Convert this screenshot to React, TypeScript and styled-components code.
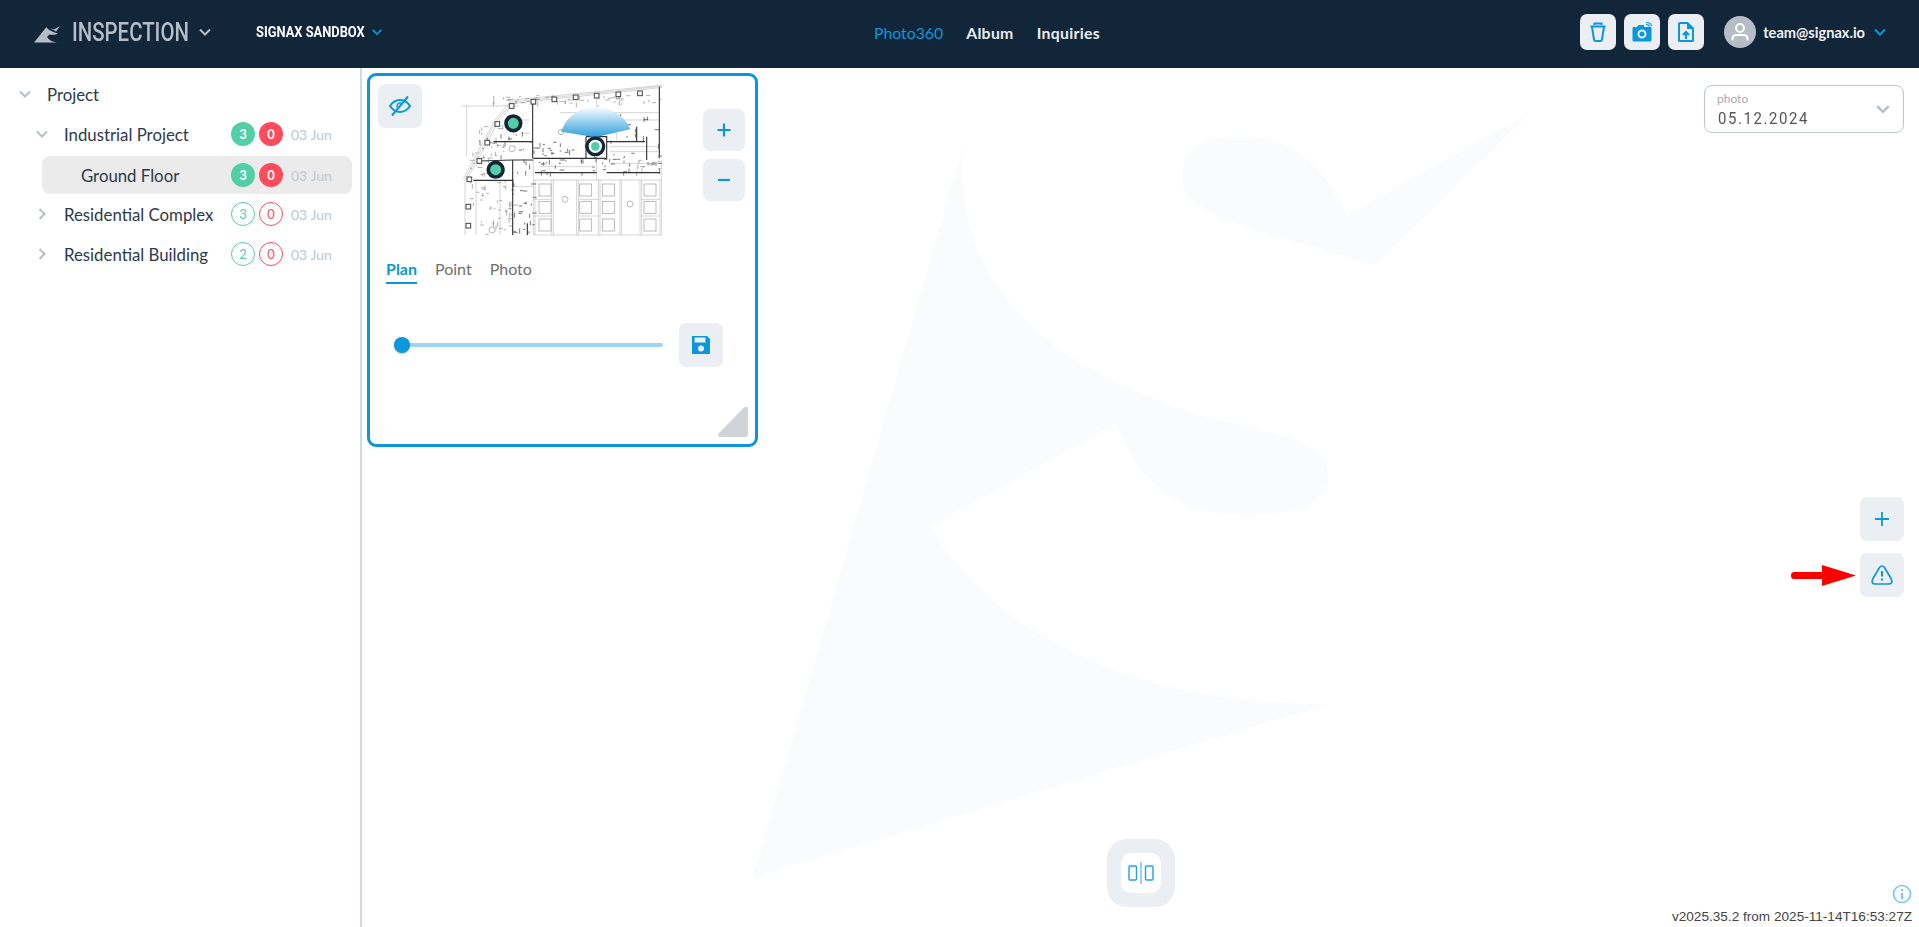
import styled, { createGlobalStyle } from "styled-components";

const BLUE = "#0a97db";
const NAVY = "#12263a";

const GlobalStyle = createGlobalStyle`
  html, body { margin: 0; padding: 0; height: 100%; background: #fff; overflow: hidden; }
  body { font-family: "Lato", "Noto Sans", sans-serif; color: #2c3a4d; }
  #root { height: 100%; }
`;

const Page = styled.div`
  display: flex;
  flex-direction: column;
  width: 1919px;
  height: 927px;
`;

const Header = styled.header`
  display: flex;
  align-items: center;
  flex: 0 0 68px;
  box-sizing: border-box;
  background: ${NAVY};
  padding: 0 32px 4px 34px;
`;

const Logo = styled.svg`
  width: 28px;
  height: 20px;
  margin: 3px 10px 0 0;
`;

const Narrow = styled.span<{ $w: number; $scale: number }>`
  display: inline-block;
  width: ${(p) => p.$w}px;
  white-space: nowrap;
  transform: scaleX(${(p) => p.$scale});
  transform-origin: left center;
`;

const AppName = styled(Narrow)`
  font-family: "Roboto", sans-serif;
  font-weight: 500;
  font-size: 25.5px;
  color: #b6bdc7;
`;

const Chevron = styled.svg<{ $color?: string; $size?: number }>`
  width: ${(p) => p.$size ?? 14}px;
  height: ${(p) => p.$size ?? 14}px;
  flex: none;
  fill: none;
  stroke: ${(p) => p.$color ?? "#b6bdc7"};
  stroke-width: 2;
`;

const AppChevron = styled(Chevron)`
  margin-left: 14px;
`;

const ProjectName = styled(Narrow)`
  font-family: "Roboto", sans-serif;
  font-weight: 700;
  font-size: 15.5px;
  color: #fff;
  margin-left: 44px;
`;

const ProjectChevron = styled(Chevron)`
  margin-left: 5px;
`;

const Nav = styled.nav`
  display: flex;
  gap: 23px;
  margin-left: 491px;
`;

const NavItem = styled.a<{ $active?: boolean }>`
  font-size: 15.8px;
  font-weight: ${(p) => (p.$active ? 400 : 700)};
  letter-spacing: ${(p) => (p.$active ? 0 : 0.3)}px;
  color: ${(p) => (p.$active ? BLUE : "#e8ecf0")};
`;

const HeaderRight = styled.div`
  display: flex;
  align-items: center;
  margin-left: auto;
`;

const ToolGroup = styled.div`
  display: flex;
  gap: 8px;
  margin-right: 20px;
`;

const IconButton = styled.button<{ $size?: number }>`
  display: flex;
  align-items: center;
  justify-content: center;
  width: ${(p) => p.$size ?? 44}px;
  height: ${(p) => p.$size ?? 44}px;
  padding: 0;
  border: 0;
  border-radius: 7px;
  background: #ebeff3;
  color: ${BLUE};
`;

const Avatar = styled.div`
  display: flex;
  align-items: center;
  justify-content: center;
  width: 32px;
  height: 32px;
  border-radius: 50%;
  background: #b6bdc7;
`;

const Email = styled.span`
  margin: 0 8px 0 7px;
  font-size: 14.6px;
  font-weight: 700;
  color: #f0f2f5;
`;

const Main = styled.main`
  display: flex;
  flex: 1;
  min-height: 0;
`;

const Sidebar = styled.aside`
  flex: 0 0 360px;
  padding-top: 6px;
  border-right: 2px solid #cfd8e3;
`;

const Row = styled.div<{ $selected?: boolean; $indent: number }>`
  display: flex;
  align-items: center;
  box-sizing: border-box;
  height: ${(p) => (p.$selected ? 38 : 40)}px;
  margin: ${(p) => (p.$selected ? "2px 8px 0 42px" : "0 8px 0 0")};
  padding-left: ${(p) => (p.$selected ? 39 : p.$indent)}px;
  border-radius: 8px;
  background: ${(p) => (p.$selected ? "#ebebeb" : "transparent")};
`;

const RowChevron = styled(Chevron)`
  margin-right: 15px;
`;

const RowLabel = styled.span`
  flex: 1;
  font-size: 16.8px;
  color: #2c3a4d;
  white-space: nowrap;
`;

const Badge = styled.span<{ $kind: "ok" | "bad"; $filled: boolean }>`
  display: flex;
  align-items: center;
  justify-content: center;
  box-sizing: border-box;
  width: 24px;
  height: 24px;
  margin-right: 4px;
  border-radius: 50%;
  font-size: 13px;
  font-weight: 700;
  ${(p) => {
    const c = p.$kind === "ok" ? "#52cfa6" : "#ff4b5c";
    return p.$filled
      ? `background: ${c}; color: #fff;`
      : `border: 1px solid ${c}; color: ${c}; font-weight: 400;`;
  }}
`;

const RowDate = styled.span`
  width: 61px;
  margin-left: 4px;
  font-size: 14px;
  color: #c0c6d2;
  white-space: nowrap;
`;

const Stage = styled.section`
  position: relative;
  flex: 1;
  overflow: hidden;
`;

const Watermark = styled.svg`
  position: absolute;
  inset: 0;
  width: 100%;
  height: 100%;
`;

const Panel = styled.div`
  position: absolute;
  left: 5px;
  top: 5px;
  display: flex;
  flex-direction: column;
  box-sizing: border-box;
  width: 391px;
  height: 374px;
  padding: 8px 10px 8px 8px;
  border: 3px solid ${BLUE};
  border-radius: 9px;
  background: #fff;
`;

const PanelTop = styled.div`
  display: flex;
  height: 154px;
`;

const PlanImage = styled.svg`
  width: 200px;
  height: 151px;
  margin: 1px 0 0 40px;
  filter: blur(0.4px);
`;

const ZoomColumn = styled.div`
  display: flex;
  flex-direction: column;
  gap: 8px;
  margin: 25px 0 0 41px;
`;

const Tabs = styled.div`
  display: flex;
  gap: 18px;
  margin: 21px 0 0 8px;
`;

const Tab = styled.span<{ $active?: boolean }>`
  padding-bottom: 4px;
  font-size: 16px;
  font-weight: ${(p) => (p.$active ? 700 : 400)};
  color: ${(p) => (p.$active ? BLUE : "#6f6f6f")};
  border-bottom: 2px solid ${(p) => (p.$active ? BLUE : "transparent")};
`;

const SliderRow = styled.div`
  display: flex;
  align-items: center;
  margin: 39px 0 0 16px;
`;

const Slider = styled.div`
  display: flex;
  align-items: center;
  width: 269px;
  height: 4px;
  margin-right: 16px;
  border-radius: 2px;
  background: #9fd6ef;
`;

const Thumb = styled.span`
  width: 16px;
  height: 16px;
  border-radius: 50%;
  background: ${BLUE};
  box-shadow: 0 1px 2px rgba(0, 0, 0, 0.25);
`;

const Corner = styled.svg`
  position: relative;
  right: -3px;
  top: 1px;
  width: 30px;
  height: 31px;
  margin: auto 0 0 auto;
`;

const PhotoSelect = styled.div`
  position: absolute;
  top: 17px;
  right: 15px;
  display: flex;
  align-items: center;
  justify-content: space-between;
  box-sizing: border-box;
  width: 200px;
  height: 48px;
  padding: 0 12px 0 12px;
  border: 1px solid #bcc5d3;
  border-radius: 8px;
  background: #fff;
`;

const SelectText = styled.div`
  display: flex;
  flex-direction: column;
`;

const SelectLabel = styled.span`
  font-size: 12px;
  line-height: 15px;
  color: #aaa;
`;

const SelectValue = styled(Narrow)`
  margin: 1px 0 -1px 1px;
  font-family: "Roboto", sans-serif;
  font-size: 17px;
  line-height: 22px;
  letter-spacing: 1.8px;
  color: #555;
`;

const SideTools = styled.div`
  position: absolute;
  top: 429px;
  right: 15px;
  display: flex;
  flex-direction: column;
  gap: 12px;
`;

const RedArrow = styled.svg`
  position: absolute;
  left: -69px;
  top: 66px;
  width: 66px;
  height: 24px;
`;

const CompareDock = styled.div`
  position: absolute;
  left: 745px;
  bottom: 20px;
  display: flex;
  align-items: center;
  justify-content: center;
  width: 68px;
  height: 68px;
  border-radius: 20px;
  background: #ebeff3;
`;

const CompareButton = styled.div`
  display: flex;
  align-items: center;
  justify-content: center;
  width: 40px;
  height: 40px;
  border-radius: 10px;
  background: #fff;
`;

const Footer = styled.div`
  position: absolute;
  right: 7px;
  bottom: 3px;
  display: flex;
  flex-direction: column;
  align-items: flex-end;
  font-family: "Liberation Sans", sans-serif;
  font-size: 13.6px;
  line-height: 15px;
  color: #444;
`;

const InfoIcon = styled.svg`
  width: 20px;
  height: 20px;
  margin-bottom: 5px;
`;

const Down = () => <path d="M2 4.5 7 9.5 12 4.5" />;

const rows = [
  { label: "Project", indent: 18, open: true },
  { label: "Industrial Project", indent: 35, open: true, ok: 3, bad: 0, filled: true },
  { label: "Ground Floor", indent: 0, selected: true, ok: 3, bad: 0, filled: true },
  { label: "Residential Complex", indent: 35, open: false, ok: 3, bad: 0, filled: false },
  { label: "Residential Building", indent: 35, open: false, ok: 2, bad: 0, filled: false },
];

// column stubs along the curved outer wall
const columns = [
  [185, 78], [250, 65], [313, 58], [377, 52], [440, 47], [505, 43], [570, 40], [142, 132],
  [112, 188], [88, 243], [58, 298], [55, 380], [55, 437],
];

const thickWalls = [
  "M248 68V235", "M130 185H248", "M70 301H190", "M90 243 188 240H250", "M188 240V465",
  "M250 235H410", "M408 170V235", "M408 170H470V235H408", "M470 185H585", "M560 140V185",
  "M628 20V235", "M590 170V240", "M255 278H440", "M470 278H630", "M232 430V465",
];

const thinLines = [
  "M36 78H205", "M50 78V230", "M440 47V300", "M330 98H628", "M45 300V465", "M78 300V465",
  "M215 120H240", "M500 120H625", "M215 160H240", "M500 125V180", "M190 320H250", "M150 300V465",
  "M250 300H635", "M250 465H635", "M250 240V465", "M635 240V465", "M305 300V465", "M385 300V465",
  "M445 300V465", "M510 300V465", "M575 300V465", "M480 200H628", "M480 215H628", "M270 260H420",
  "M480 250H628", "M175 72 640 22", "M170 62 640 15", "M40 296 135 120 175 72", "M50 300 145 125 180 85",
  "M175 67 640 18", "M45 298 140 122 178 78", "M255 300V465", "M380 300V465", "M450 300V465", "M630 300V465",
  "M570 300V465", "M515 300V465", "M310 300V465", "M250 358H305", "M250 408H305", "M385 358H445", "M385 408H445",
  "M575 358H630", "M575 408H630",
];

const tiles = [285, 407, 475, 600].flatMap((x) => [330, 382, 435].map((y) => [x, y]));

// dense annotation clutter of the drawing, same on every render
function clutter(n: number, x0: number, y0: number, w: number, h: number, seed: number) {
  const out: string[] = [];
  let s = seed;
  const next = () => {
    s = (s * 16807) % 2147483647;
    return s / 2147483647;
  };
  for (let i = 0; i < n; i++) {
    const x = Math.round(x0 + next() * w);
    const y = Math.round(y0 + next() * h);
    const len = 4 + Math.round(next() * 12);
    out.push(next() > 0.5 ? `M${x} ${y}h${len}` : `M${x} ${y}v${len}`);
  }
  return out.join("");
}

const clutterDark = [
  clutter(70, 250, 180, 380, 100, 17),
  clutter(26, 190, 240, 60, 225, 91),
  clutter(18, 90, 150, 150, 90, 33),
  clutter(16, 480, 100, 140, 70, 57),
].join("");

const clutterLight = [
  clutter(50, 60, 300, 130, 165, 71),
  clutter(60, 130, 45, 500, 30, 5),
  clutter(40, 60, 120, 100, 170, 13),
  clutter(20, 560, 240, 70, 40, 29),
].join("");

function FloorPlan() {
  return (
    <PlanImage viewBox="36 15 600 453">
      <defs>
        <linearGradient id="cone" x1="0" y1="0" x2="0" y2="1">
          <stop offset="0" stopColor="#fff" />
          <stop offset="1" stopColor="#2f9fdc" />
        </linearGradient>
      </defs>
      <g fill="none" stroke="#a5a5a5" strokeWidth="1.4">
        {thinLines.map((d) => <path key={d} d={d} />)}
      </g>
      <path d={clutterLight} fill="none" stroke="#8a8a8a" strokeWidth="2" />
      <g fill="none" stroke="#333" strokeWidth="3.4">
        {thickWalls.map((d) => <path key={d} d={d} />)}
      </g>
      <path d={clutterDark} fill="none" stroke="#444" strokeWidth="2.2" />
      <g fill="#fff" stroke="#444" strokeWidth="3">
        {columns.map(([x, y]) => <rect key={`${x}-${y}`} x={x - 7} y={y - 7} width="14" height="14" />)}
      </g>
      <g fill="#fff" stroke="#aaa" strokeWidth="2.4">
        {tiles.map(([x, y]) => <rect key={`${x}-${y}`} x={x - 18} y={y - 18} width="36" height="36" />)}
        <circle cx="345" cy="358" r="9" />
        <circle cx="540" cy="372" r="9" />
        <circle cx="333" cy="156" r="8" />
        <circle cx="186" cy="206" r="9" />
        <circle cx="126" cy="450" r="9" />
      </g>
      <path d="M333 155C350 105 395 80 436 80S525 105 541 148L436 172Z" fill="url(#cone)" />
      <g stroke={NAVY} fill="#52cfa6">
        <circle cx="190" cy="130" r="22" strokeWidth="11" />
        <circle cx="137" cy="269" r="22" strokeWidth="11" />
      </g>
      <circle cx="436" cy="199" r="25" fill="#fff" stroke={NAVY} strokeWidth="10" />
      <circle cx="436" cy="199" r="13" fill="#52cfa6" />
    </PlanImage>
  );
}

export default function App() {
  return (
    <Page>
      <GlobalStyle />
      <Header>
        <Logo viewBox="0 0 28 20">
          <path d="M0 18.5 12.5 3C13 5 17 7.5 24 9.5 22 11 18 11 15.5 10.5L13 13C15 16 18 18 23 18.5Z" fill="#b6bdc7" />
          <path d="M16 4 20 5.5 26 2 22 7.5Z" fill="#b6bdc7" />
        </Logo>
        <AppName $w={112} $scale={0.8}>INSPECTION</AppName>
        <AppChevron viewBox="0 0 14 14"><Down /></AppChevron>
        <ProjectName $w={110} $scale={0.83}>SIGNAX SANDBOX</ProjectName>
        <ProjectChevron $color={BLUE} $size={12} viewBox="0 0 14 14"><Down /></ProjectChevron>
        <Nav>
          <NavItem $active>Photo360</NavItem>
          <NavItem>Album</NavItem>
          <NavItem>Inquiries</NavItem>
        </Nav>
        <HeaderRight>
          <ToolGroup>
            <IconButton $size={36}>
              <svg width="20" height="22" viewBox="0 0 20 22" fill="none" stroke="currentColor" strokeWidth="2">
                <path d="M2.5 5.5H17.5M6.5 4V2.5H13.5V4M4 6 6 18.5Q6.2 20 7.8 20H12.2Q13.8 20 14 18.5L16 6" />
              </svg>
            </IconButton>
            <IconButton $size={36}>
              <svg width="22" height="22" viewBox="0 0 22 22" fill="currentColor">
                <path d="M2.5 6H6L7.5 4H13V6H19.5Q20.5 6 20.5 7V19Q20.5 20.5 19 20.5H3Q1.5 20.5 1.5 19V7Q1.5 6 2.5 6ZM11 8.5A4.5 4.5 0 1 0 11 17.5 4.5 4.5 0 1 0 11 8.5ZM11 10.5A2.5 2.5 0 1 1 11 15.5 2.5 2.5 0 1 1 11 10.5Z" fillRule="evenodd" />
                <path d="M15 1.5Q20 1.5 20.5 5M15 3.5Q18 3.5 18.5 5.5" fill="none" stroke="currentColor" strokeWidth="1.2" />
              </svg>
            </IconButton>
            <IconButton $size={36}>
              <svg width="18" height="22" viewBox="0 0 18 22">
                <path d="M3 1H11L17 7V19.5Q17 21 15.5 21H2.5Q1 21 1 19.5V3Q1 1 3 1Z" fill="currentColor" />
                <path d="M3 3H10V8H15V19H3Z" fill="#ebeff3" />
                <path d="M9 18V12.5M6 14 9 11 12 14" fill="none" stroke="currentColor" strokeWidth="2.2" />
              </svg>
            </IconButton>
          </ToolGroup>
          <Avatar>
            <svg width="18" height="20" viewBox="0 0 18 20" fill="none" stroke="#fff" strokeWidth="2">
              <circle cx="9" cy="6" r="4" />
              <path d="M1.5 18.5V16.5Q1.5 13 5.5 13H12.5Q16.5 13 16.5 16.5V18.5" />
            </svg>
          </Avatar>
          <Email>team@signax.io</Email>
          <Chevron $color={BLUE} viewBox="0 0 14 14"><Down /></Chevron>
        </HeaderRight>
      </Header>
      <Main>
        <Sidebar>
          {rows.map((r) => (
            <Row key={r.label} $indent={r.indent} $selected={r.selected}>
              {!r.selected && (
                <RowChevron $size={14} viewBox="0 0 14 14">
                  {r.open ? <Down /> : <path d="M4.5 2 9.5 7 4.5 12" />}
                </RowChevron>
              )}
              <RowLabel>{r.label}</RowLabel>
              {r.ok !== undefined && (
                <>
                  <Badge $kind="ok" $filled={!!r.filled}>{r.ok}</Badge>
                  <Badge $kind="bad" $filled={!!r.filled}>{r.bad}</Badge>
                  <RowDate>03 Jun</RowDate>
                </>
              )}
            </Row>
          ))}
        </Sidebar>
        <Stage>
          <Watermark viewBox="362 68 1557 859">
            <path
              fill="#fafbfc"
              d="M964 143 753 877 1328 704C1180 706 1010 660 930 526L1116 423C1135 470 1165 515 1248 515 1300 515 1330 500 1328 475 1328 445 1290 437 1217 420 1110 390 945 320 964 143Z"
            />
            <path
              fill="#fafbfc"
              d="M1530 113 1346 216C1325 165 1290 137 1240 137 1200 137 1182 152 1182 177 1182 200 1200 210 1256 230L1375 265Z"
            />
          </Watermark>
          <Panel>
            <PanelTop>
              <IconButton>
                <svg width="24" height="24" viewBox="0 0 24 24" fill="none" stroke="currentColor" strokeWidth="2">
                  <path d="M2 12C5 7.5 8 6 12 6S19 7.5 22 12C19 16.5 16 18 12 18S5 16.5 2 12Z" />
                  <path d="M9 13.5Q8.5 9 13 8.8" strokeWidth="1.4" />
                  <path d="M20 2.5 4 21.5" />
                </svg>
              </IconButton>
              <FloorPlan />
              <ZoomColumn>
                <IconButton $size={42}>
                  <svg width="16" height="16" viewBox="0 0 16 16" stroke="currentColor" strokeWidth="2.2"><path d="M8 1.5V14.5M1.5 8H14.5" /></svg>
                </IconButton>
                <IconButton $size={42}>
                  <svg width="16" height="16" viewBox="0 0 16 16" stroke="currentColor" strokeWidth="2.2"><path d="M2 8H14" /></svg>
                </IconButton>
              </ZoomColumn>
            </PanelTop>
            <Tabs>
              <Tab $active>Plan</Tab>
              <Tab>Point</Tab>
              <Tab>Photo</Tab>
            </Tabs>
            <SliderRow>
              <Slider><Thumb /></Slider>
              <IconButton>
                <svg width="20" height="20" viewBox="0 0 20 20">
                  <path d="M1 1H16L19 4V19H1ZM3.5 2.5V7.5H14.5V2.5ZM10 10.5A3 3 0 1 0 10 16.5 3 3 0 1 0 10 10.5Z" fill="currentColor" fillRule="evenodd" />
                </svg>
              </IconButton>
            </SliderRow>
            <Corner viewBox="0 0 30 31">
              <path d="M1 27 26 1.5Q30 -1 30 4V28Q30 31 27 31H3Q-2 31 1 27Z" fill="#d0d3d8" />
            </Corner>
          </Panel>
          <PhotoSelect>
            <SelectText>
              <SelectLabel>photo</SelectLabel>
              <SelectValue $w={90} $scale={0.88}>05.12.2024</SelectValue>
            </SelectText>
            <Chevron $color="#b6bdc7" $size={16} viewBox="0 0 14 14"><Down /></Chevron>
          </PhotoSelect>
          <SideTools>
            <IconButton>
              <svg width="16" height="16" viewBox="0 0 16 16" stroke="currentColor" strokeWidth="1.8"><path d="M8 1V15M1 8H15" /></svg>
            </IconButton>
            <IconButton>
              <svg width="22" height="22" viewBox="0 0 22 22" fill="none" stroke="currentColor" strokeWidth="1.7">
                <path d="M8.5 3.5Q11 0.5 13.5 3.5L20 14.5Q22.5 20 17.5 20H4.5Q-0.5 20 2 14.5Z" />
                <path d="M11 7V12.5M11 14.5V16.5" strokeWidth="2" />
              </svg>
            </IconButton>
            <RedArrow viewBox="0 0 66 24">
              <path d="M3 9H31V2L65 12.5 31 23V16H3Q0 16 0 12.5 0 9 3 9Z" fill="#fe0000" />
            </RedArrow>
          </SideTools>
          <CompareDock>
            <CompareButton>
              <svg width="26" height="22" viewBox="0 0 26 22" fill="none" stroke="#28a2df" strokeWidth="1.4">
                <rect x="1" y="4" width="7.5" height="14" rx="1" />
                <rect x="17.5" y="4" width="7.5" height="14" rx="1" />
                <path d="M13 0V22" stroke="#7cc8ee" strokeWidth="1.6" />
              </svg>
            </CompareButton>
          </CompareDock>
          <Footer>
            <InfoIcon viewBox="0 0 20 20" fill="none" stroke="#7cc8ee" strokeWidth="1.7">
              <circle cx="10" cy="10" r="8.5" />
              <path d="M10 9V15M10 5V7" strokeWidth="2" />
            </InfoIcon>
            v2025.35.2 from 2025-11-14T16:53:27Z
          </Footer>
        </Stage>
      </Main>
    </Page>
  );
}
